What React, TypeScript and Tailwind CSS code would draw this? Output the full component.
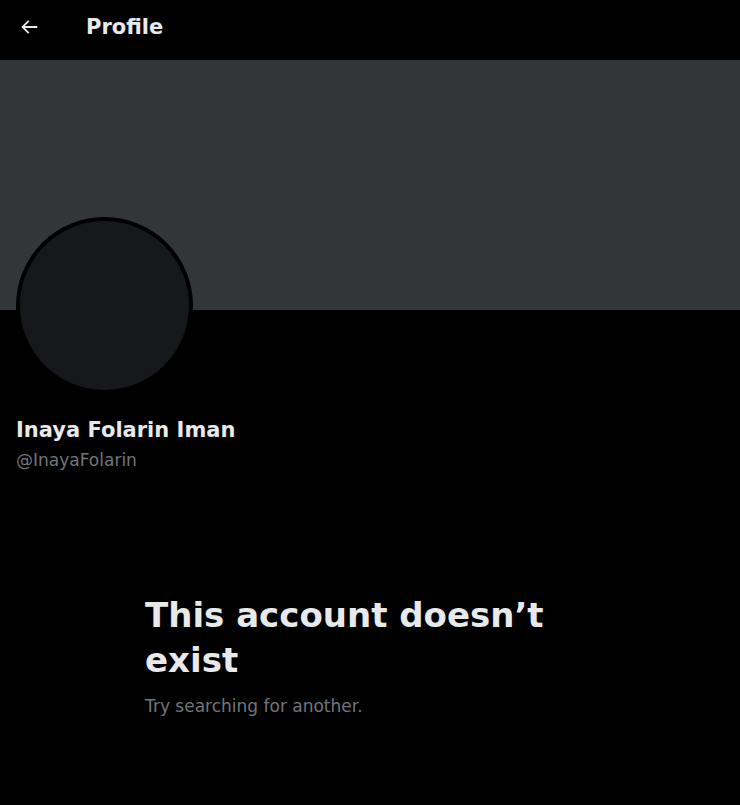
const font = { fontFamily: '"DejaVu Sans", "Noto Sans", Arial, sans-serif' };

export default function App() {
  return (
    <div className="min-h-[805px] w-full bg-black text-[#e7e9ea]" style={font}>
      {/* Top bar */}
      <header className="flex h-[60px] items-center px-4 pb-[6px]">
        <div className="flex w-[56px] items-center">
          <svg width="22" height="22" viewBox="0 0 24 24" className="ml-[2px] text-[#e7e9ea]">
            <path
              d="M7.414 13l5.043 5.04-1.414 1.42L3.586 12l7.457-7.46 1.414 1.42L7.414 11H21v2H7.414z"
              fill="currentColor"
            />
          </svg>
        </div>
        <h1 className="ml-[14px] text-[21px] font-bold leading-6">Profile</h1>
      </header>

      {/* Banner */}
      <div className="h-[250px] w-full bg-[#333639]" />

      {/* Avatar + names */}
      <div className="px-4">
        <div className="-mt-[93px] h-[177px] w-[177px] rounded-full border-4 border-black bg-[#16181c]" />
        <div className="mt-[22px]">
          <div className="text-[21px] font-bold leading-7">Inaya Folarin Iman</div>
          <div className="mt-[4px] text-[17px] leading-[24px] text-[#71767b]">@InayaFolarin</div>
        </div>
      </div>

      {/* Empty state */}
      <div className="mx-auto mt-[121px] w-[450px] pr-[20px]">
        <h2 className="text-[34px] font-bold leading-[45px]">This account doesn’t exist</h2>
        <p className="mt-[12px] text-[17px] leading-[22px] text-[#71767b]">Try searching for another.</p>
      </div>
    </div>
  );
}
